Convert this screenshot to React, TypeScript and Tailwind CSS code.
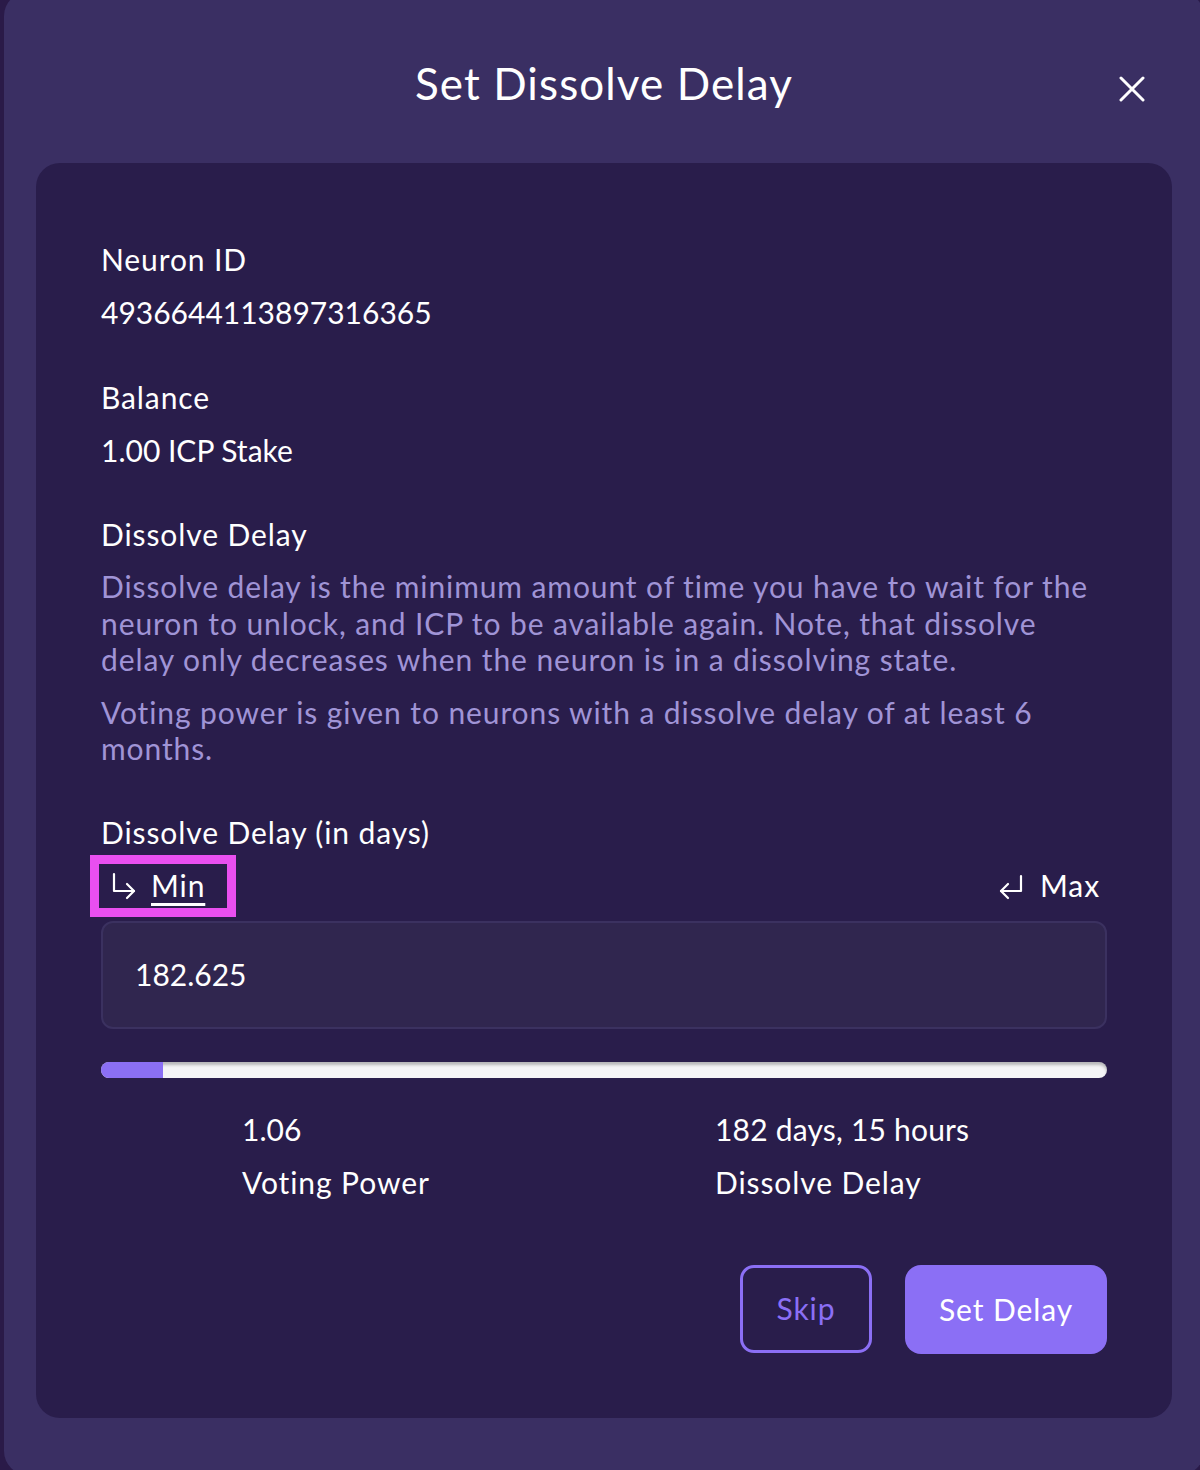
import React from "react";

const CornerDownRight = () => (
  <svg width="26" height="28" viewBox="0 0 26 28" fill="none" stroke="currentColor" strokeWidth="2.2" strokeLinecap="round" strokeLinejoin="round">
    <path d="M3 2v17h20" />
    <path d="M16 12l7 7-7 7" />
  </svg>
);

const CornerDownLeft = () => (
  <svg width="26" height="28" viewBox="0 0 26 28" fill="none" stroke="currentColor" strokeWidth="2.2" strokeLinecap="round" strokeLinejoin="round">
    <path d="M23 4v15H3" />
    <path d="M10 12l-7 7 7 7" />
  </svg>
);

const Field = ({ label, value }: { label: string; value: string }) => (
  <div className="flex flex-col gap-[17px]">
    <p className="leading-[36px]">{label}</p>
    <p className="leading-[36px] tracking-normal">{value}</p>
  </div>
);

export default function App() {
  const progress = 6.2;

  return (
    <div className="w-[1200px] h-[1470px] overflow-hidden bg-[#2a1a48] font-[Lato,sans-serif] text-[30px] tracking-[0.9px] text-white">
      <div className="ml-[4px] -mt-2 w-[1200px] h-[1483px] rounded-3xl bg-[#3a2f63] pt-2 px-8">
        <div className="relative h-[163px] flex items-center justify-center pt-[2px]">
          <h1 className="text-[44px] leading-none tracking-[1.1px]">Set Dissolve Delay</h1>
          <button className="absolute right-[27px] top-[76px] text-white">
            <svg width="26" height="26" viewBox="0 0 26 26" stroke="currentColor" strokeWidth="3" strokeLinecap="round">
              <path d="M2 2l22 22M24 2L2 24" />
            </svg>
          </button>
        </div>

        <div className="rounded-3xl bg-[#291d4b] px-[65px] pt-[78px] pb-[64px]">
          <Field label="Neuron ID" value="4936644113897316365" />
          <div className="mt-[49px]">
            <Field label="Balance" value="1.00 ICP Stake" />
          </div>

          <p className="mt-[48px] leading-[36px]">Dissolve Delay</p>
          <p className="mt-[16px] leading-[36.5px] text-[#a094d6]">
            Dissolve delay is the minimum amount of time you have to wait for the neuron to
            unlock, and ICP to be available again. Note, that dissolve delay only decreases when
            the neuron is in a dissolving state.
          </p>
          <p className="mt-[16px] leading-[36px] text-[#a094d6]">
            Voting power is given to neurons with a dissolve delay of at least 6 months.
          </p>

          <p className="mt-[48px] leading-[36px]">Dissolve Delay (in days)</p>

          <div className="mt-[18px] flex items-center justify-between h-[36px]">
            <button className="-ml-[11px] flex items-center gap-[14px] border-[9px] border-[#e94ff0] h-[62px] pl-[12px] pr-[22px]">
              <CornerDownRight />
              <span className="underline underline-offset-[6px] decoration-[3px]">Min</span>
            </button>
            <button className="mr-[7px] flex items-center gap-[16px]">
              <CornerDownLeft />
              <span>Max</span>
            </button>
          </div>

          <div className="mt-[17px] h-[108px] rounded-xl border-2 border-[#3b3160] bg-[#30264f] flex items-center pl-[32px] tracking-normal">
            182.625
          </div>

          <div className="mt-[33px] h-[16px] rounded-full bg-[#f4f4f6] shadow-[inset_0_3px_3px_rgba(0,0,0,0.25)] overflow-hidden">
            <div className="h-full bg-[#8b6ff5]" style={{ width: `${progress}%` }} />
          </div>

          <div className="mt-[33px] grid grid-cols-2">
            <div className="pl-[141px] flex flex-col gap-[17px]">
              <p className="leading-[36px] tracking-normal">1.06</p>
              <p className="leading-[36px]">Voting Power</p>
            </div>
            <div className="pl-[111px] flex flex-col gap-[17px]">
              <p className="leading-[36px] tracking-[0.2px]">182 days, 15 hours</p>
              <p className="leading-[36px]">Dissolve Delay</p>
            </div>
          </div>

          <div className="mt-[65px] flex justify-end gap-[33px]">
            <button className="w-[132px] h-[88px] rounded-[14px] border-[3px] border-[#8b6ff5] text-[#8b6ff5]">
              Skip
            </button>
            <button className="w-[202px] h-[89px] rounded-2xl bg-[#8b6ff5] text-white">
              Set Delay
            </button>
          </div>
        </div>
      </div>
    </div>
  );
}
